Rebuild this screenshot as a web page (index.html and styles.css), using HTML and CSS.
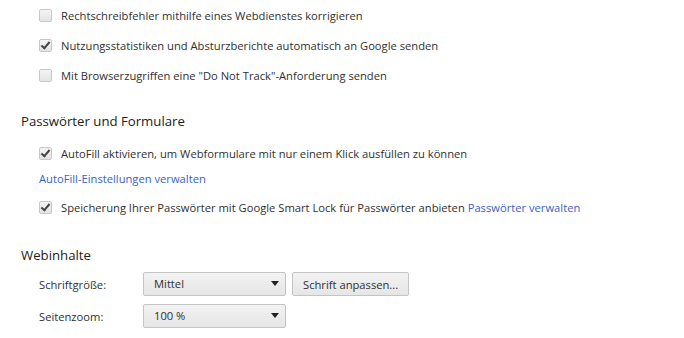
FILE: index.html
```html
<!DOCTYPE html>
<html lang="de">
<head>
  <meta charset="UTF-8">
  <title>Einstellungen</title>
  <link rel="stylesheet" href="styles.css">
</head>
<body>
  <div class="settings">
    <div class="section first">
      <div class="check-row">
        <span class="box"></span>
        <span>Rechtschreibfehler mithilfe eines Webdienstes korrigieren</span>
      </div>
      <div class="check-row">
        <span class="box checked"></span>
        <span>Nutzungsstatistiken und Absturzberichte automatisch an Google senden</span>
      </div>
      <div class="check-row">
        <span class="box"></span>
        <span>Mit Browserzugriffen eine "Do Not Track"-Anforderung senden</span>
      </div>
    </div>

    <h3 class="title">Passwörter und Formulare</h3>
    <div class="section">
      <div class="check-row">
        <span class="box checked"></span>
        <span>AutoFill aktivieren, um Webformulare mit nur einem Klick ausfüllen zu können</span>
      </div>
      <div class="link-row"><a href="#">AutoFill-Einstellungen verwalten</a></div>
      <div class="check-row">
        <span class="box checked"></span>
        <span>Speicherung Ihrer Passwörter mit Google Smart Lock für Passwörter anbieten <a href="#">Passwörter verwalten</a></span>
      </div>
    </div>

    <h3 class="title web">Webinhalte</h3>
    <div class="section">
      <div class="field-row">
        <span class="label">Schriftgröße:</span>
        <div class="select">Mittel<span class="arrow"></span></div>
        <button class="btn">Schrift anpassen...</button>
      </div>
      <div class="field-row">
        <span class="label">Seitenzoom:</span>
        <div class="select">100 %<span class="arrow"></span></div>
      </div>
    </div>
  </div>
</body>
</html>
```

FILE: styles.css
```css
body {
  margin: 0;
  background: #fff;
  font-family: "Open Sans", "Noto Sans", sans-serif;
  font-size: 11.2px;
  color: #303030;
}
.settings {
  padding: 0 0 0 21px;
}
.section {
  padding-left: 18px;
}
.check-row {
  display: flex;
  align-items: center;
  gap: 9px;
  height: 30px;
}
.box {
  width: 11px;
  height: 11px;
  border: 1px solid #c8c8c8;
  border-radius: 2px;
  background: linear-gradient(#f4f4f4, #e4e4e4);
  position: relative;
  flex: none;
}
.box.checked::after {
  content: "";
  position: absolute;
  left: 3px;
  top: 0px;
  width: 3px;
  height: 7px;
  border: solid #444;
  border-width: 0 2px 2px 0;
  transform: rotate(40deg);
}
.title {
  margin: 0;
  font-size: 13.2px;
  line-height: 17px;
  font-weight: normal;
  color: #222;
  padding: 23px 0 8px;
}
.title.web {
  padding-top: 25px;
}
a {
  color: #3a5fc5;
  text-decoration: none;
}
.link-row {
  height: 18px;
  line-height: 18px;
  margin: 2px 0 4px;
}
.field-row {
  display: flex;
  align-items: center;
  gap: 6px;
  margin-bottom: 8px;
}
.label {
  width: 98px;
}
.select {
  width: 115px;
  height: 22px;
  line-height: 22px;
  padding: 0 16px 0 10px;
  border: 1px solid #c4c4c4;
  border-radius: 2px;
  background: linear-gradient(#f2f2f2, #e6e6e6);
  position: relative;
}
.arrow {
  position: absolute;
  right: 6px;
  top: 8px;
  border-left: 4px solid transparent;
  border-right: 4px solid transparent;
  border-top: 5px solid #222;
}
.btn {
  height: 24px;
  padding: 0 10px;
  border: 1px solid #c4c4c4;
  border-radius: 2px;
  background: linear-gradient(#f2f2f2, #e6e6e6);
  font: inherit;
  color: #303030;
}
```
